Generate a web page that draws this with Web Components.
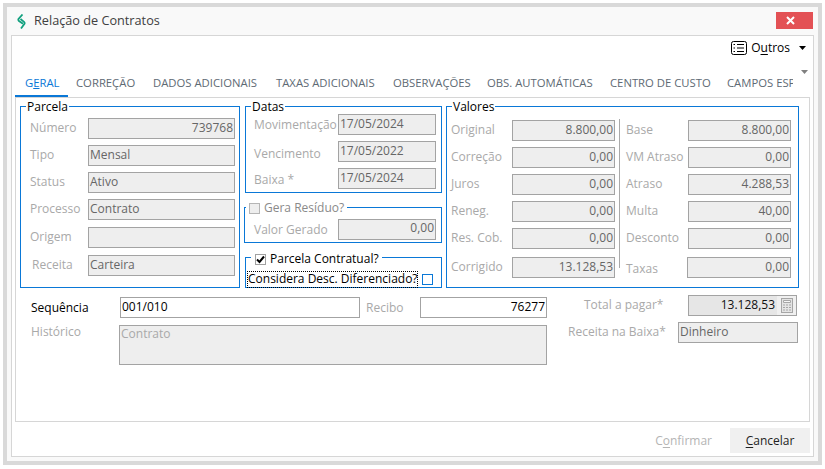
<!DOCTYPE html>
<html lang="pt-BR">
<head>
<meta charset="utf-8">
<title>Relação de Contratos</title>
<style>
  html, body { margin: 0; background: #fff; }
  body { font: 12px/16px "Open Sans", "Noto Sans", sans-serif; }
  .main { display: grid; grid-template-columns: 225px 201px 353px; height: 190px; padding-left: 4px; }
  .mid { display: flex; flex-direction: column; margin-right: 4px; }
  .cols { display: grid; grid-template-columns: 164px 1px 172px; column-gap: 4px; }
  .col { display: flex; flex-direction: column; gap: 6px; }
  .rule { background: #a9a9a9; height: 149px; margin-top: -1px; }
  .lower { display: grid; grid-template-columns: 532px 251px; padding: 7px 0 0 4px; }
  .lower-left { display: flex; flex-direction: column; gap: 7px; padding-top: 2px; }
  .lower-right { display: flex; flex-direction: column; gap: 6px; }
  .seq { display: flex; }
</style>
</head>
<body>
<contract-dialog caption="Relação de Contratos">
  <others-menu></others-menu>
  <tab-strip active="GERAL" widths="53|76|123|117|94|123|117|75" labels="GERAL|CORREÇÃO|DADOS ADICIONAIS|TAXAS ADICIONAIS|OBSERVAÇÕES|OBS. AUTOMÁTICAS|CENTRO DE CUSTO|CAMPOS ESP">
    <div class="main">
      <group-box caption="Parcela" style="--pad: 4px 4px 0 9px; --row-gap: 6px; margin-right: 5px">
        <form-field label="Número" label-width="58" width="147" num value="739768"></form-field>
        <form-field label="Tipo" label-width="58" width="147" value="Mensal"></form-field>
        <form-field label="Status" label-width="58" width="147" value="Ativo"></form-field>
        <form-field label="Processo" label-width="58" width="147" value="Contrato"></form-field>
        <form-field label="Origem" label-width="58" width="147" value="" style="margin-top:1px"></form-field>
        <form-field label="Receita" label-width="58" indent="2" width="147" value="Carteira" style="margin-top:1px"></form-field>
      </group-box>
      <div class="mid">
        <group-box caption="Datas" style="--pad: 0 4px 0 8px; --row-gap: 6px; height: 95px">
          <form-field label="Movimentação" label-width="84" width="98" value="17/05/2024" drop="3"></form-field>
          <form-field label="Vencimento" label-width="84" width="98" value="17/05/2022" drop="7"></form-field>
          <form-field label="Baixa *" label-width="84" width="98" value="17/05/2024" drop="5"></form-field>
        </group-box>
        <group-box style="--pad: 2px 4px 0 9px; --cap-x: 1px; margin: 6px 0 0 -1px; height: 44px">
          <check-box slot="caption" label="Gera Resíduo?" disabled></check-box>
          <form-field label="Valor Gerado" label-width="84" width="98" num value="0,00" drop="4"></form-field>
        </group-box>
        <group-box style="--pad: 2px 3px 0 1px; --cap-x: 5px; --cap-top: 4px; --cap-shift: 0; margin-top: 4px; height: 41px">
          <check-box slot="caption" label="Parcela Contratual?" checked style="padding-left: 3px"></check-box>
          <focus-check label="Considera Desc. Diferenciado?"></focus-check>
        </group-box>
      </div>
      <group-box caption="Valores" style="--pad: 6px 4px 0 4px">
        <div class="cols">
          <div class="col">
            <form-field label="Original" label-width="61" width="103" num value="8.800,00"></form-field>
            <form-field label="Correção" label-width="61" width="103" num value="0,00"></form-field>
            <form-field label="Juros" label-width="61" width="103" num value="0,00"></form-field>
            <form-field label="Reneg." label-width="61" width="103" num value="0,00"></form-field>
            <form-field label="Res. Cob." label-width="61" width="103" num value="0,00"></form-field>
            <form-field label="Corrigido" label-width="61" width="103" num value="13.128,53" style="margin-top:2px"></form-field>
          </div>
          <div class="rule"></div>
          <div class="col" style="padding-left:2px">
            <form-field label="Base" label-width="62" width="103" num value="8.800,00"></form-field>
            <form-field label="VM Atraso" label-width="62" width="103" num value="0,00"></form-field>
            <form-field label="Atraso" label-width="62" width="103" num value="4.288,53"></form-field>
            <form-field label="Multa" label-width="62" width="103" num value="40,00"></form-field>
            <form-field label="Desconto" label-width="62" width="103" num value="0,00"></form-field>
            <form-field label="Taxas" label-width="61" width="104" num value="0,00" drop="5" style="margin-top:2px"></form-field>
          </div>
        </div>
      </group-box>
    </div>
    <div class="lower">
      <div class="lower-left">
        <div class="seq">
          <form-field label="Sequência" label-width="100" indent="11" width="240" value="001/010" tone="live" label-dark drop="3"></form-field>
          <form-field label="Recibo" label-width="60" indent="6" width="127" num value="76277" tone="live" drop="3"></form-field>
        </div>
        <form-field label="Histórico" label-width="99" indent="11" width="428" height="40" value="Contrato" tone="faint" top></form-field>
      </div>
      <div class="lower-right">
        <form-field label="Total a pagar*" label-width="136" indent="32" width="109" num value="13.128,53" tone="total" calc></form-field>
        <form-field label="Receita na Baixa*" label-width="126" indent="16" width="120" value="Dinheiro"></form-field>
      </div>
    </div>
  </tab-strip>
</contract-dialog>

<script>
class ContractDialog extends HTMLElement {
  constructor() {
    super();
    const shadowRoot = this.attachShadow({mode: 'open'});

    shadowRoot.innerHTML = `
      <style>
        :host {
          display: block;
          box-sizing: border-box;
          width: 819px;
          height: 462px;
          margin: 3px 0 0 3px;
          border: 4px solid #d9d9d9;
          background: #f9f9f9;
          color: #000;
          font: 12px/16px "Open Sans", "Noto Sans", sans-serif;
        }

        .title {
          display: flex;
          align-items: center;
          height: 28px;
          padding-left: 10px;
          font-size: 12.7px;
          color: #404040;
        }

        .title svg { margin: 0 8px 0 0; }
        .title span { padding-bottom: 2px; }

        .close {
          align-self: flex-start;
          width: 37px;
          height: 17px;
          margin: 5px 5px 0 auto;
          background: #e35155;
          display: grid;
          place-items: center;
        }

        .inner {
          box-sizing: border-box;
          height: 422px;
          margin: 0 4px 0 4px;
          border: 1px solid #d6d6d6;
          background: #fff;
          padding: 0 3px;
        }

        .foot {
          display: flex;
          justify-content: flex-end;
          align-items: center;
          height: 25px;
          margin-top: 6px;
        }

        .confirm { color: #b4b4b4; margin-right: 18px; }

        .cancel {
          width: 80px;
          height: 25px;
          background: #f0f0f0;
          color: #222;
          text-align: center;
          line-height: 25px;
        }

        u { text-underline-offset: 2px; }
      </style>

      <div class="title">
        <svg width="9" height="15" viewBox="0 0 9 15" fill="none" stroke="#11a07e" stroke-width="1.8">
          <path d="M5.5 0.5 L1.5 5 Q1 6 2 7 L6 9.8"/>
          <path d="M3.5 5 L7 7.8 Q8 8.8 7.5 9.8 L4 14.5"/>
        </svg>
        <span>${this.getAttribute('caption')}</span>
        <div class="close">
          <svg width="9" height="9" viewBox="0 0 9 9" stroke="#fff" stroke-width="2"><path d="M1 1 8 8M8 1 1 8"/></svg>
        </div>
      </div>
      <div class="inner">
        <slot></slot>
        <div class="foot">
          <span class="confirm">C<u>o</u>nfirmar</span>
          <span class="cancel"><u>C</u>ancelar</span>
        </div>
      </div>
    `;
  }
}

class OthersMenu extends HTMLElement {
  constructor() {
    super();
    const shadowRoot = this.attachShadow({mode: 'open'});

    shadowRoot.innerHTML = `
      <style>
        :host {
          display: flex;
          justify-content: flex-end;
          align-items: center;
          height: 24px;
          padding: 0 4px 0 0;
          gap: 4px;
        }

        u { text-underline-offset: 2px; }
        .arrow { margin-left: 5px; }
      </style>

      <svg width="16" height="16" viewBox="0 0 16 16" fill="none" stroke="#000">
        <rect x="0.5" y="1.5" width="15" height="13" rx="2"/>
        <path d="M6 4.5h7M6 8h7M6 11.5h7M2.5 4.5h1.5M2.5 8h1.5M2.5 11.5h1.5"/>
      </svg>
      <span>O<u>u</u>tros</span>
      <svg class="arrow" width="7" height="4" viewBox="0 0 7 4"><path d="M0 0h7L3.5 4z"/></svg>
    `;
  }
}

class TabStrip extends HTMLElement {
  constructor() {
    super();
    const shadowRoot = this.attachShadow({mode: 'open'});
    const active = this.getAttribute('active');
    const widths = this.getAttribute('widths').split('|');
    const tabs = this.getAttribute('labels').split('|').map((label, i) => {
      const text = label === 'GERAL' ? 'G<u>E</u>RAL' : label;

      return `<span class="tab${label === active ? ' on' : ''}" style="width:${widths[i]}px">${text}</span>`;
    }).join('');

    shadowRoot.innerHTML = `
      <style>
        :host {
          display: block;
          position: relative;
        }

        .tabs {
          display: flex;
          height: 37px;
          width: 780px;
          overflow: hidden;
          white-space: nowrap;
          box-sizing: border-box;
          font-size: 11.3px;
        }

        .tab {
          flex: none;
          box-sizing: border-box;
          height: 37px;
          padding: 15px 0 0 9px;
          overflow: hidden;
          color: #5e6a74;
        }

        .tab:nth-child(2) { padding-left: 8px; }

        .tab.on {
          color: #0a78d7;
          padding-left: 10px;
          border-bottom: 2px solid #0a78d7;
        }

        .more {
          position: absolute;
          right: 2px;
          top: 10px;
        }

        .panel {
          box-sizing: border-box;
          height: 325px;
          border: 1px solid #d6d6d6;
        }
      </style>

      <div class="tabs">${tabs}</div>
      <svg class="more" width="7" height="4" viewBox="0 0 7 4"><path d="M0 0h7L3.5 4z" fill="#808080"/></svg>
      <div class="panel"><slot></slot></div>
    `;
  }
}

class GroupBox extends HTMLElement {
  constructor() {
    super();
    const shadowRoot = this.attachShadow({mode: 'open'});
    const caption = this.getAttribute('caption') || '';

    shadowRoot.innerHTML = `
      <style>
        :host { display: block; }

        fieldset {
          box-sizing: border-box;
          height: 100%;
          min-width: 0;
          margin: 0;
          padding: 0;
          border: 1px solid #0a78d7;
        }

        legend {
          padding: var(--cap-top, 0) 1px 0;
          margin-left: var(--cap-x, 5px);
          line-height: 16px;
        }

        .cap {
          display: inline-block;
          transform: translateY(var(--cap-shift, 1px));
        }

        .body {
          display: flex;
          flex-direction: column;
          gap: var(--row-gap, 0);
          padding: var(--pad, 0);
        }
      </style>

      <fieldset>
        <legend><span class="cap"><slot name="caption">${caption}</slot></span></legend>
        <div class="body"><slot></slot></div>
      </fieldset>
    `;
  }
}

class FormField extends HTMLElement {
  constructor() {
    super();
    const shadowRoot = this.attachShadow({mode: 'open'});
    const labelWidth = this.getAttribute('label-width') || 60;
    const indent = this.getAttribute('indent') || 0;
    const width = this.getAttribute('width') || 100;
    const height = this.getAttribute('height') || 21;
    const drop = this.getAttribute('drop') || 0;
    const top = this.hasAttribute('top');
    const calc = this.hasAttribute('calc');

    shadowRoot.innerHTML = `
      <style>
        :host {
          display: flex;
          align-items: ${top ? 'flex-start' : 'center'};
          flex: none;
          height: ${height}px;
        }

        .label {
          box-sizing: border-box;
          width: ${labelWidth}px;
          flex: none;
          margin-top: ${top ? '-1px' : '0'};
          padding: ${drop}px 0 2px ${indent}px;
          color: ${this.hasAttribute('label-dark') ? '#000' : '#a9a9a9'};
          white-space: nowrap;
        }

        .box {
          box-sizing: border-box;
          display: flex;
          align-items: ${top ? 'flex-start' : 'center'};
          width: ${width}px;
          height: ${height}px;
          padding: 0 1px;
          border: 1px solid #a3a3a3;
          background: #eee;
          color: #666;
          overflow: hidden;
          white-space: nowrap;
        }

        .box span {
          flex: 1;
          padding-bottom: ${top ? '0' : '2px'};
          text-align: ${this.hasAttribute('num') ? 'right' : 'left'};
        }

        :host([tone="live"]) .box { background: #fff; color: #000; }
        :host([tone="faint"]) .box { color: #a9a9a9; }
        :host([tone="total"]) .box { background: #e6e6e6; color: #111; padding-right: 0; }

        .calc {
          flex: none;
          width: 19px;
          height: 19px;
          margin-left: 2px;
          background: #f0f0f0;
          display: grid;
          place-items: center;
        }
      </style>

      <span class="label"></span>
      <div class="box">
        <span></span>
        ${calc ? `<div class="calc"><svg width="12" height="15" viewBox="0 0 12 15" fill="none" stroke="#a6a6a6">
          <rect x="0.5" y="0.5" width="11" height="14" fill="#e4e4e4"/>
          <path d="M2.5 2.5h7v2h-7z" fill="#f6f6f6"/>
          <path d="M2 7h2M5 7h2M8 7h2M2 9.5h2M5 9.5h2M8 9.5h2M2 12h2M5 12h2M8 12h2"/>
        </svg></div>` : ''}
      </div>
    `;

    shadowRoot.querySelector('.label').textContent = this.getAttribute('label');
    shadowRoot.querySelector('.box span').textContent = this.getAttribute('value');
  }
}

class CheckBox extends HTMLElement {
  constructor() {
    super();
    const shadowRoot = this.attachShadow({mode: 'open'});
    const checked = this.hasAttribute('checked');
    const disabled = this.hasAttribute('disabled');

    shadowRoot.innerHTML = `
      <style>
        :host {
          display: inline-flex;
          align-items: center;
          gap: 4px;
          padding: 0 2px;
          color: ${disabled ? '#8a8a8a' : '#000'};
        }

        .mark {
          box-sizing: border-box;
          width: 11px;
          height: 11px;
          border: 1px solid ${disabled ? '#b5b5b5' : '#a0a0a0'};
          background: ${disabled ? '#eee' : '#fff'};
        }

        svg { display: block; }
      </style>

      <span class="mark">${checked ? `<svg width="9" height="9" viewBox="0 0 9 9" fill="none" stroke="#000" stroke-width="2"><path d="M1 4.5 3.5 7 8 1.5"/></svg>` : ''}</span>
      <span>${this.getAttribute('label')}</span>
    `;
  }
}

class FocusCheck extends HTMLElement {
  constructor() {
    super();
    const shadowRoot = this.attachShadow({mode: 'open'});

    shadowRoot.innerHTML = `
      <style>
        :host {
          display: flex;
          align-items: center;
          gap: 4px;
        }

        .text {
          outline: 1px dotted #000;
          outline-offset: -1px;
          padding: 0 0 0 1px;
          height: 17px;
          white-space: nowrap;
        }

        .mark {
          box-sizing: border-box;
          width: 11px;
          height: 11px;
          border: 1px solid #0a78d7;
          background: #fff;
        }
      </style>

      <span class="text">${this.getAttribute('label')}</span>
      <span class="mark"></span>
    `;
  }
}

customElements.define('contract-dialog', ContractDialog);
customElements.define('others-menu', OthersMenu);
customElements.define('tab-strip', TabStrip);
customElements.define('group-box', GroupBox);
customElements.define('form-field', FormField);
customElements.define('check-box', CheckBox);
customElements.define('focus-check', FocusCheck);
</script>
</body>
</html>
